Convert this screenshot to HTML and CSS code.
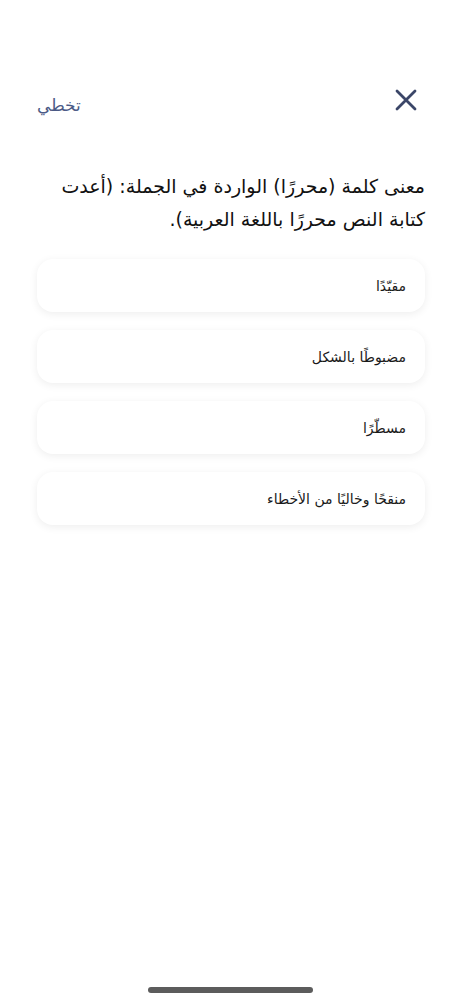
FILE: index.html
```html
<!DOCTYPE html>
<html lang="ar" dir="rtl">
<head>
<meta charset="utf-8">
<title>سؤال</title>
<link rel="stylesheet" href="styles.css">
</head>
<body>
<div class="screen">
  <header class="topbar">
    <button class="close" aria-label="إغلاق">
      <svg width="22" height="22" viewBox="0 0 22 22"><path d="M2 2 L20 20 M20 2 L2 20" stroke="#3b4668" stroke-width="2.8" stroke-linecap="round" fill="none"/></svg>
    </button>
    <button class="skip">تخطي</button>
  </header>
  <h1 class="question">معنى كلمة (محررًا) الواردة في الجملة: (أعدت كتابة النص محررًا باللغة العربية).</h1>
  <ul class="options">
    <li class="option">مقيّدًا</li>
    <li class="option">مضبوطًا بالشكل</li>
    <li class="option">مسطّرًا</li>
    <li class="option">منقحًا وخاليًا من الأخطاء</li>
  </ul>
  <div class="home-indicator"></div>
</div>
</body>
</html>
```
FILE: styles.css
```css
* { box-sizing: border-box; }
html, body { margin: 0; padding: 0; background: #ffffff; }
body {
  font-family: "DejaVu Sans", "Noto Sans", sans-serif;
  color: #111111;
}
.screen {
  width: 461px;
  height: 1000px;
  position: relative;
  padding: 86px 36px 0 37px;
}
.topbar {
  display: flex;
  justify-content: space-between;
  align-items: center;
  height: 28px;
  padding-right: 8px;
}
.close {
  background: none;
  border: 0;
  padding: 0;
  width: 22px;
  height: 22px;
  display: flex;
}
.skip {
  background: none;
  border: 0;
  padding: 0;
  font-family: "DejaVu Sans", sans-serif;
  font-size: 17px;
  color: #4b5a86;
  margin-top: 10px;
}
.question {
  margin: 56px 0 0;
  font-size: 19px;
  font-weight: normal;
  line-height: 33px;
  color: #111;
}
.options {
  list-style: none;
  margin: 23px 0 0;
  padding: 0;
  display: flex;
  flex-direction: column;
  gap: 18px;
}
.option {
  height: 53px;
  border-radius: 16px;
  background: #fff;
  box-shadow: 0 2px 8px rgba(0,0,0,0.07);
  display: flex;
  align-items: center;
  padding: 0 19px;
  font-size: 14px;
  color: #1a1a1a;
}
.home-indicator {
  position: absolute;
  left: 148px;
  top: 987px;
  width: 165px;
  height: 6px;
  border-radius: 3px;
  background: #5c5c5c;
}
```
